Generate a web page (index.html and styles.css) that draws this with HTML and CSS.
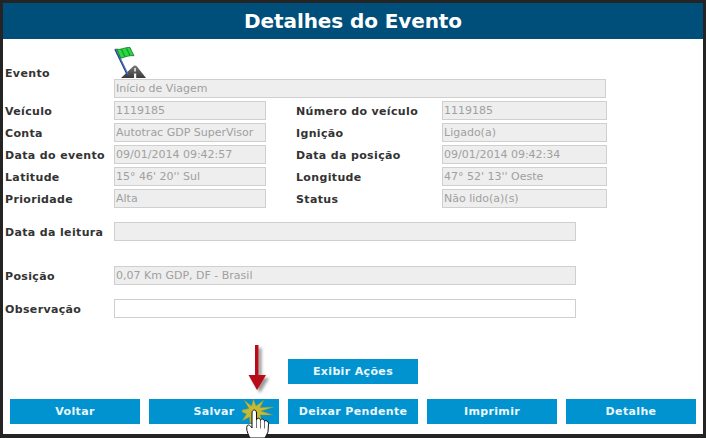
FILE: index.html
```html
<!DOCTYPE html>
<html lang="pt">
<head>
<meta charset="utf-8">
<title>Detalhes do Evento</title>
<link rel="stylesheet" href="styles.css">
</head>
<body>
<main class="frame">
  <h1 class="title">Detalhes do Evento</h1>
  <section class="event-row">
    <div class="label">Evento</div>
    <div class="event-col">
      <svg class="flag" width="33" height="32" viewBox="0 0 33 32" aria-hidden="true">
        <defs>
          <linearGradient id="road" x1="0" y1="0" x2="0" y2="1"><stop offset="0" stop-color="#777"/><stop offset="1" stop-color="#3a3a3a"/></linearGradient>
        </defs>
        <path d="M7 31 L19 19.500 Q21 17.500 23 19.500 L32 31 Z" fill="url(#road)"/>
        <path d="M20.300 21h1.500v3.500h-1.500zM20 26.500h2.200v4.500H20z" fill="#f4f4f4"/>
        <path d="M1.200 2 L13.500 27.500" stroke="#1c3f92" stroke-width="2" fill="none"/>
        <path d="M1.800 2 L14 27.500" stroke="#9cb8e6" stroke-width="0.500" fill="none"/>
        <path d="M2.700 2 C6 3.500 11 0 16 0.500 C17 3 18.500 6 20 8.700 C15.500 8 11 10 6.700 11.300 C5.500 8 4 5 2.700 2 Z" fill="#2bd840" stroke="#0f6a1e" stroke-width="0.800"/>
        <path d="M7.500 2.500 L11 9.500 M12.500 1.500 L16 8.500" stroke="#0f9a2a" stroke-width="1.200" fill="none"/>
      </svg>
      <div class="field field-event">Início de Viagem</div>
    </div>
  </section>
  <section class="grid">
    <div class="label">Veículo</div><div class="field">1119185</div>
    <div class="label">Número do veículo</div><div class="field">1119185</div>
    <div class="label">Conta</div><div class="field">Autotrac GDP SuperVisor</div>
    <div class="label">Ignição</div><div class="field">Ligado(a)</div>
    <div class="label">Data do evento</div><div class="field">09/01/2014 09:42:57</div>
    <div class="label">Data da posição</div><div class="field">09/01/2014 09:42:34</div>
    <div class="label">Latitude</div><div class="field">15° 46' 20'' Sul</div>
    <div class="label">Longitude</div><div class="field">47° 52' 13'' Oeste</div>
    <div class="label">Prioridade</div><div class="field">Alta</div>
    <div class="label">Status</div><div class="field">Não lido(a)(s)</div>
  </section>
  <section class="wide-row wide-first">
    <div class="label">Data da leitura</div><div class="field field-wide"></div>
  </section>
  <section class="wide-row wide-pos">
    <div class="label">Posição</div><div class="field field-wide">0,07 Km GDP, DF - Brasil</div>
  </section>
  <section class="wide-row wide-obs">
    <div class="label">Observação</div><div class="field field-wide field-open"></div>
  </section>
  <div class="actions">
    <button class="btn">Exibir Ações</button>
  </div>
  <div class="buttons">
    <button class="btn">Voltar</button>
    <button class="btn">Salvar</button>
    <button class="btn">Deixar Pendente</button>
    <button class="btn">Imprimir</button>
    <button class="btn">Detalhe</button>
  </div>
  <svg class="pointer" width="50" height="98" viewBox="0 0 50 98" aria-hidden="true">
    <defs>
      <filter id="soft" x="-50%" y="-50%" width="200%" height="200%"><feGaussianBlur stdDeviation="1.500"/></filter>
    </defs>
    <path d="M20 5h3.500v30h7.500L22 50 13.500 35H20z" fill="#555" opacity="0.600" filter="url(#soft)" transform="translate(3 3)"/>
    <path d="M20 5h3.500v30h7.500L22 50 13.500 35H20z" fill="#b80d18"/>
    <path d="M7 70 L14 68.500 L9 60 L16.500 66 L18.500 59 L21 66 L29 60 L25 67.500 L39 67 L26 71 L38 75 L25 75 L28 83 L20 77 L15 84 L14.500 77 L7 81 L11.500 74 L7 72 Z" fill="#c6ba35" stroke="#8d8a30" stroke-width="0.400"/>
    <path d="M15 98 C13 94 11 90 12 86 C13 84 15 85 17 88 L17 73 C17 69 21.500 69 21.500 73 L21.500 80 C22 77 25.500 78 25.500 80.500 C26 78 29.500 79 29.500 81.500 C30 80 33.500 80.500 33.500 83.500 L33 92 L30 98 Z" fill="#fff" stroke="#111" stroke-width="1"/>
    <path d="M21.500 80v8M25.500 80.500v8M29.500 81.500v7" stroke="#333" stroke-width="0.700" fill="none"/>
  </svg>
</main>
</body>
</html>
```
FILE: styles.css
```css
* { box-sizing: border-box; }
html, body { margin: 0; padding: 0; background: #fff; }
.frame {
  position: relative;
  width: 706px;
  height: 438px;
  border: solid #242424;
  border-width: 3px 3px 4px 3px;
  background: #fff;
  font-family: "DejaVu Sans", Verdana, sans-serif;
}
.title {
  margin: 0;
  height: 36px;
  background: #004f7a;
  color: #fff;
  font-size: 20px;
  line-height: 36px;
  font-weight: bold;
  text-align: center;
  letter-spacing: -0.1px;
}
.label {
  height: 19px;
  font-size: 11px;
  font-weight: bold;
  color: #333;
  line-height: 19px;
  padding-top: 1px;
  padding-left: 2px;
  letter-spacing: 0.35px;
  white-space: nowrap;
}
.field {
  height: 19px;
  border: 1px solid #cfcfcf;
  background: #eeeeee;
  color: #a0a0a0;
  font-size: 11px;
  line-height: 18px;
  padding-left: 1px;
  white-space: nowrap;
  overflow: hidden;
}
.event-row {
  display: flex;
  align-items: center;
  margin-top: 8px;
}
.event-row .label { width: 111px; }
.event-col { display: flex; flex-direction: column; }
.flag { display: block; }
.field-event { width: 492px; }
.grid {
  display: grid;
  grid-template-columns: 111px 152px 176px 165px;
  grid-auto-rows: 19px;
  row-gap: 3px;
  margin-top: 3px;
}
.grid .label:nth-child(4n+3) { padding-left: 30px; }
.wide-row { display: flex; }
.wide-row .label { width: 111px; }
.field-wide { width: 462px; }
.field-open { background: #fff; }
.wide-first { margin-top: 14px; }
.wide-pos { margin-top: 25px; }
.wide-obs { margin-top: 14px; }
.btn {
  width: 130px;
  height: 25px;
  padding: 0;
  border: 0;
  background: #0093d0;
  color: #eaf6fb;
  font-family: inherit;
  font-size: 11px;
  font-weight: bold;
  letter-spacing: 0.35px;
}
.actions {
  display: flex;
  justify-content: center;
  margin-top: 41px;
}
.buttons {
  display: flex;
  justify-content: center;
  gap: 9px;
  margin-top: 15px;
}
.pointer {
  position: absolute;
  left: 232px;
  top: 337px;
}
```
